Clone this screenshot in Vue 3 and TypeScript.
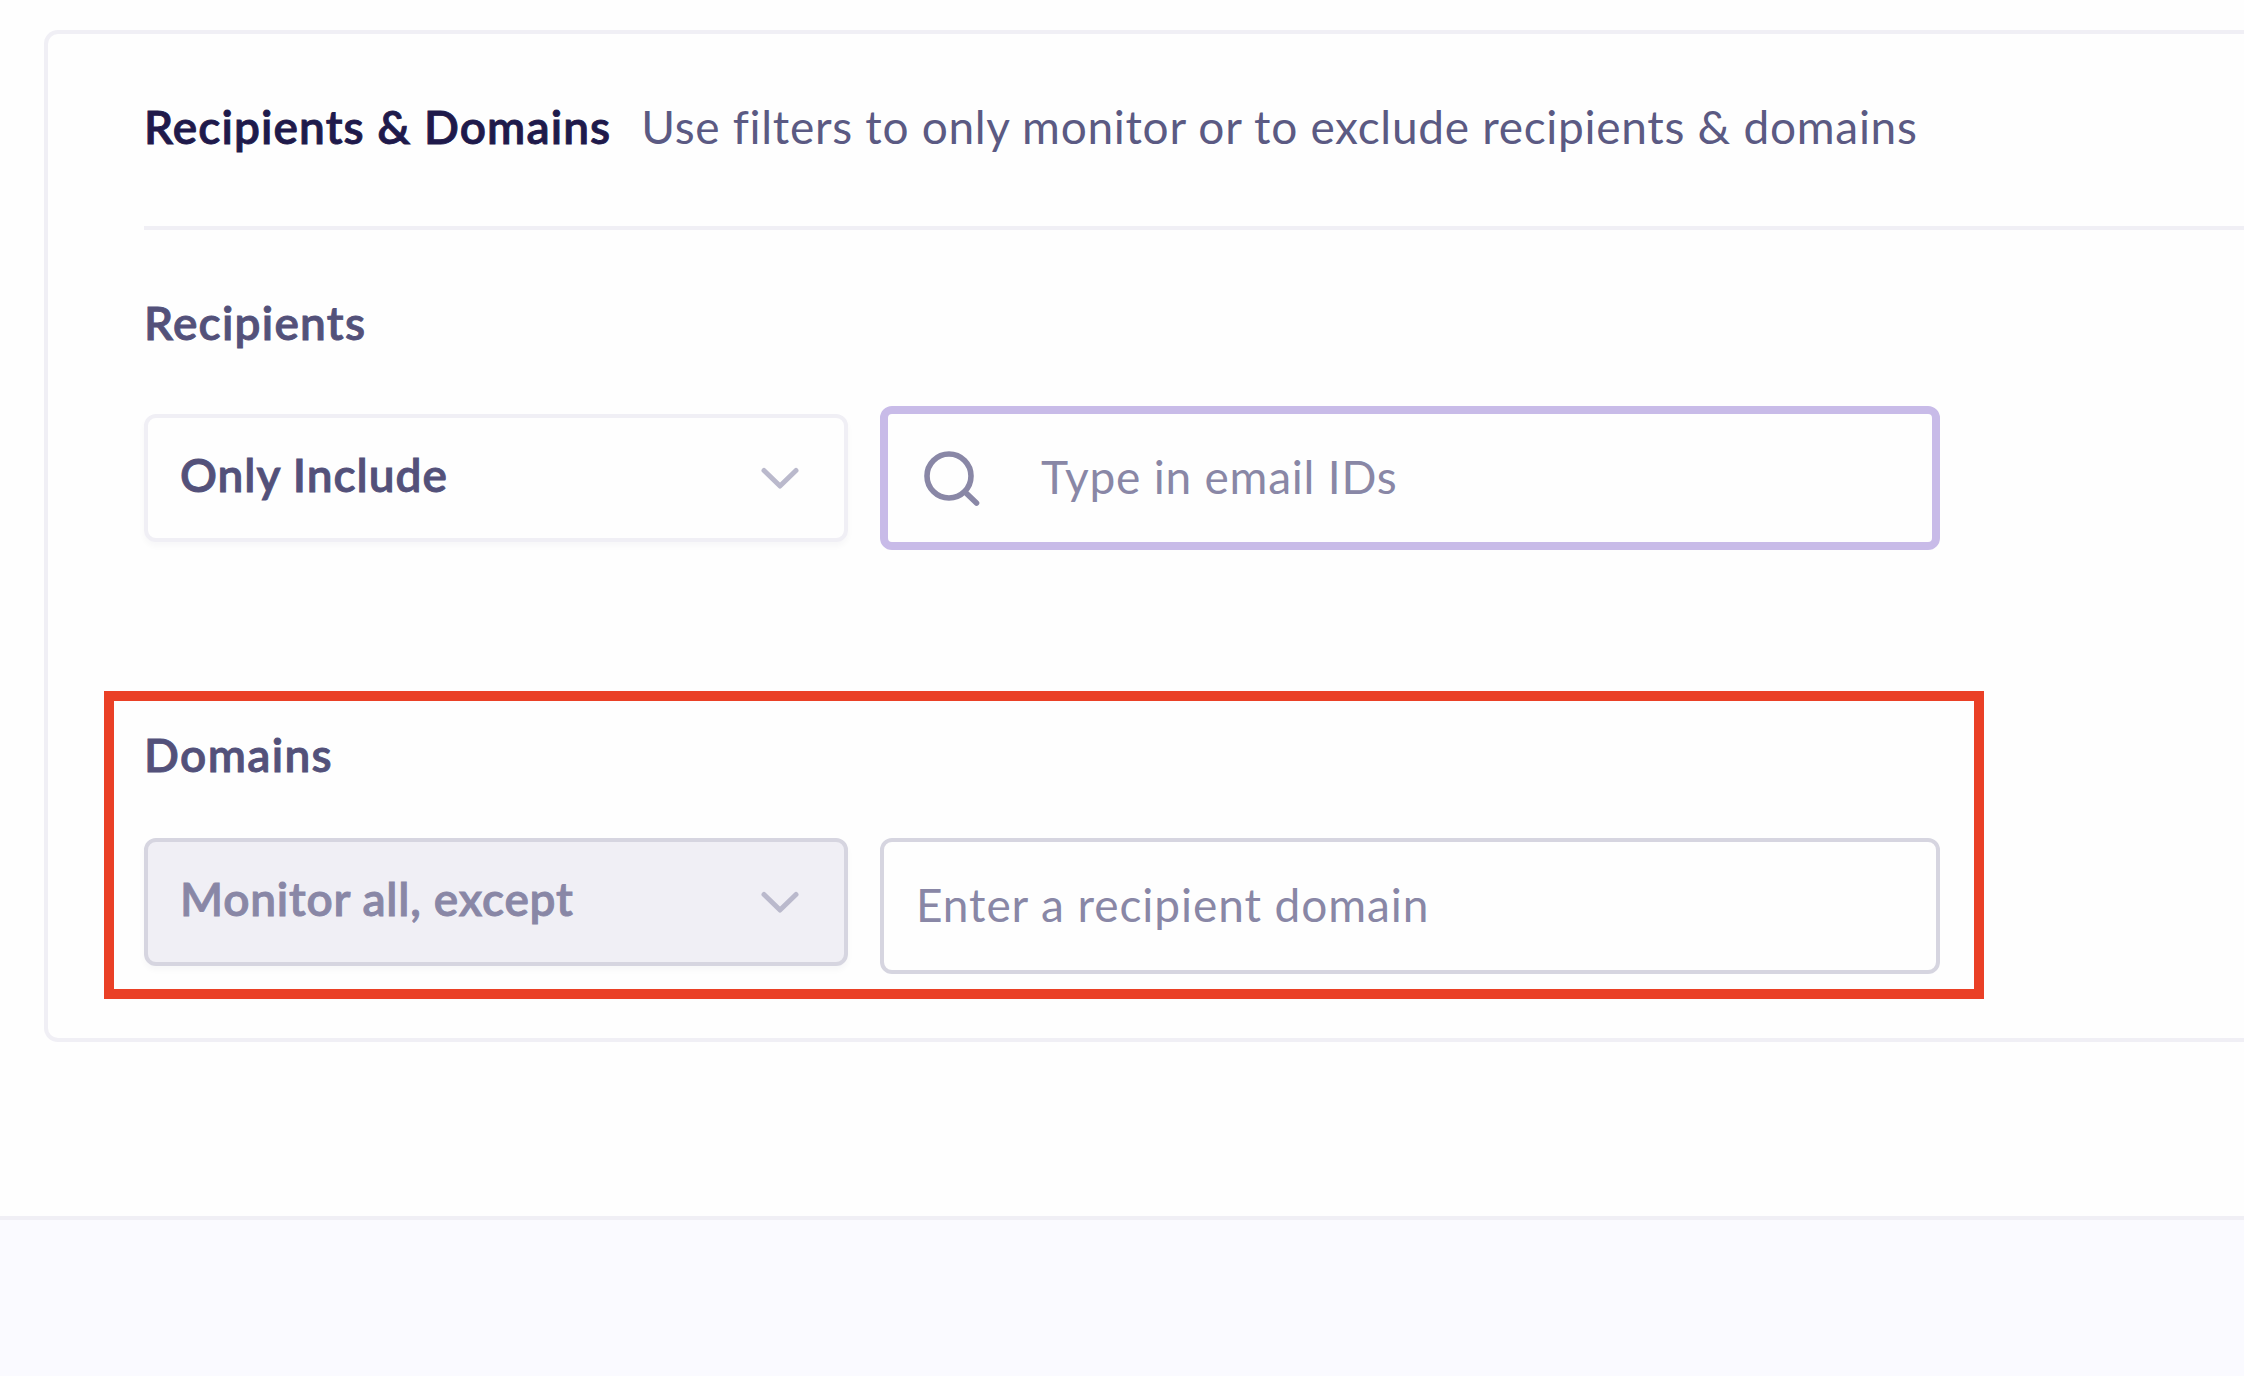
<script setup lang="ts">
import { ref } from 'vue'

const recipientQuery = ref<string>('')
const domainQuery = ref<string>('')
</script>

<template>
  <main class="page">
    <section class="card">
      <header class="card-head">
        <h2 class="title">Recipients &amp; Domains</h2>
        <p class="subtitle">Use filters to only monitor or to exclude recipients &amp; domains</p>
      </header>

      <div class="group">
        <h3 class="label label-recipients">Recipients</h3>
        <div class="row row-center">
          <button type="button" class="select">
            <span class="select-text include">Only Include</span>
            <svg class="chevron" width="40" height="26" viewBox="0 0 40 26" fill="none">
              <path d="M4 4.5L20 20L36 4.5" stroke="#bab9cc" stroke-width="5" stroke-linecap="round" stroke-linejoin="round" />
            </svg>
          </button>
          <label class="field focused">
            <svg class="search" width="60" height="60" viewBox="0 0 60 60" fill="none">
              <circle cx="27" cy="27" r="22" stroke="#8987a6" stroke-width="5.6" />
              <path d="M43 43L54.5 54" stroke="#8987a6" stroke-width="5.6" stroke-linecap="round" />
            </svg>
            <input v-model="recipientQuery" class="input email" type="text" placeholder="Type in email IDs" />
          </label>
        </div>
      </div>

      <div class="group domains">
        <h3 class="label label-domains">Domains</h3>
        <div class="row">
          <button type="button" class="select disabled" disabled>
            <span class="select-text except">Monitor all, except</span>
            <svg class="chevron" width="40" height="26" viewBox="0 0 40 26" fill="none">
              <path d="M4 4.5L20 20L36 4.5" stroke="#bab9cc" stroke-width="5" stroke-linecap="round" stroke-linejoin="round" />
            </svg>
          </button>
          <label class="field">
            <input v-model="domainQuery" class="input domain" type="text" placeholder="Enter a recipient domain" />
          </label>
        </div>
        <div class="highlight"></div>
      </div>
    </section>
    <footer class="footer"></footer>
  </main>
</template>

<style>
body {
  margin: 0;
  background: #fefefe;
}
</style>

<style scoped>
* {
  box-sizing: border-box;
}

.page {
  display: flex;
  flex-direction: column;
  width: 2244px;
  height: 1376px;
  padding-top: 30px;
  overflow: hidden;
  background: #fefefe;
  font-family: Lato, "Liberation Sans", sans-serif;
  font-size: 46px;
  line-height: 60px;
  color: #53517a;
}

.card {
  flex: none;
  height: 1012px;
  margin-left: 44px;
  padding: 63px 0 64px 96px;
  border: 4px solid #f0eff5;
  border-right: 0;
  border-radius: 14px 0 0 14px;
}

.card-head {
  display: flex;
  gap: 30px;
  height: 133px;
  border-bottom: 4px solid #f0eff5;
  white-space: nowrap;
}

.title,
.subtitle,
.label {
  margin: 0;
  font-size: inherit;
  font-weight: 600;
}

.title,
.label,
.select-text {
  -webkit-text-stroke: 0.9px currentColor;
}

.title {
  color: #1f1a4b;
  letter-spacing: 1.1px;
}

.subtitle {
  color: #5b5a83;
  font-weight: 400;
  letter-spacing: 0.7px;
}

.group {
  position: relative;
  padding-top: 63px;
}

.domains {
  padding-top: 175px;
}

.label-recipients {
  letter-spacing: 1.25px;
}

.label-domains {
  letter-spacing: 1.35px;
}

.row {
  display: flex;
  align-items: flex-start;
  gap: 32px;
  margin-top: 53px;
}

.row-center {
  align-items: center;
}

.select {
  display: flex;
  align-items: center;
  justify-content: space-between;
  width: 704px;
  height: 128px;
  padding: 0 44px 6px 32px;
  border: 4px solid #f0eff5;
  border-radius: 12px;
  background: #fefefe;
  box-shadow: 0 4px 6px rgba(31, 26, 75, 0.03);
  color: #53517a;
  font: inherit;
  font-weight: 600;
}

.select.disabled {
  border-color: #d6d5e0;
  background: #f0eff5;
  color: #8987a6;
}

.include {
  letter-spacing: 0.98px;
}

.except {
  letter-spacing: 0.78px;
}

.chevron {
  margin-top: 7px;
}

.field {
  display: flex;
  align-items: center;
  width: 1060px;
  height: 136px;
  padding: 0 32px 2px;
  border: 4px solid #d6d5e0;
  border-radius: 12px;
  background: #fefefe;
}

.field.focused {
  height: 144px;
  border: 8px solid #c8bbe8;
}

.search {
  flex: none;
  margin: 3px 59px 0 2px;
}

.input {
  flex: 1;
  min-width: 0;
  height: 60px;
  padding: 0;
  border: 0;
  outline: 0;
  background: transparent;
  color: #53517a;
  font: inherit;
}

.input::placeholder {
  color: #8987a6;
  opacity: 1;
}

.email {
  letter-spacing: 0.78px;
}

.domain {
  letter-spacing: 0.92px;
}

/* Annotation frame around the domain filter */
.highlight {
  position: absolute;
  top: 140.5px;
  left: -40px;
  width: 1880px;
  height: 308.5px;
  border: 10px solid #ea4026;
  pointer-events: none;
}

.footer {
  flex: 1;
  margin-top: 174px;
  border-top: 4px solid #f0eff5;
  background: #fafaff;
}
</style>
